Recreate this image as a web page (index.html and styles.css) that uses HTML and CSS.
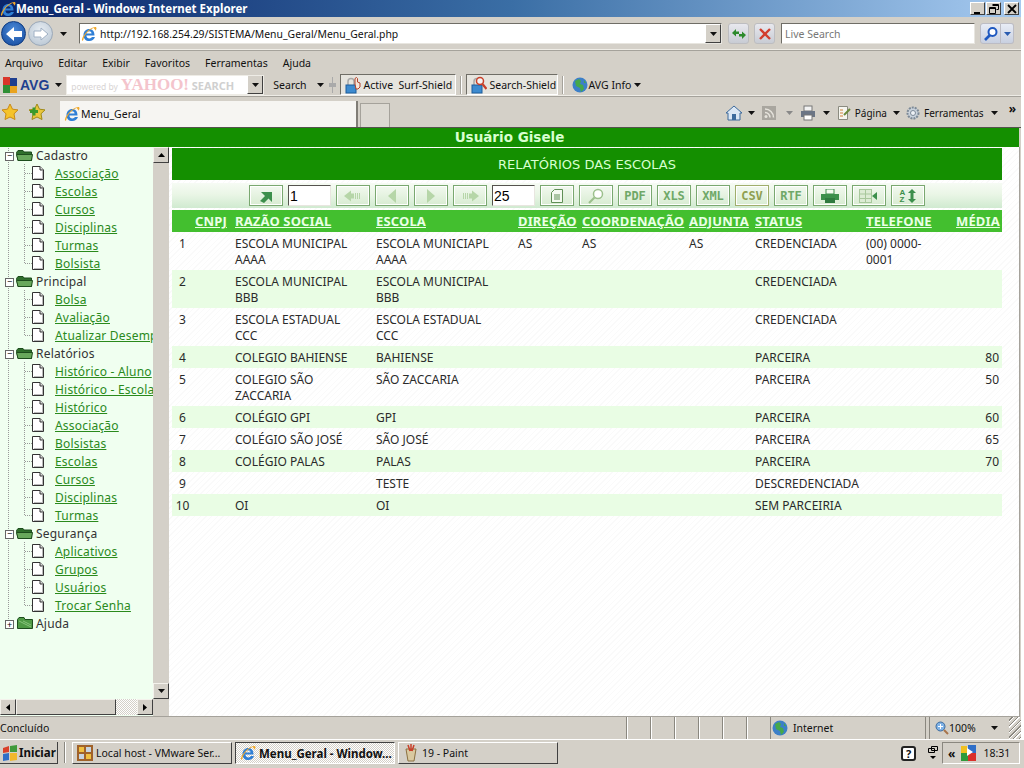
FILE: index.html
```html
<!DOCTYPE html>
<html lang="pt">
<head>
	<meta charset="UTF-8">
	<title>Menu_Geral - Windows Internet Explorer</title>
	<link rel="stylesheet" href="styles.css">
</head>
<body>
<svg class="defs" width="0" height="0">
	<symbol id="ie" viewBox="0 0 16 16">
		<path d="M2.500 9.200C2.500 5.500 5 3 8.300 3c3.200 0 5.200 2.400 5.200 6.400H5.400c.1 2 1.300 3 3 3 1.200 0 2-.5 2.600-1.300h3c-1 2.500-3.100 3.900-5.700 3.900-3.500 0-5.800-2.300-5.800-5.800zM5.500 7.400h5.100C10.400 6 9.600 5.200 8.100 5.200 6.700 5.200 5.800 6 5.500 7.400z" fill="#2f7fd6"/>
		<path d="M1 14.600C.2 12.800 4 6 9.500 2.800 12 1.300 14.600.5 15.300 1.500c.5.700 0 2-.8 3.200-.3-1-.8-1.800-1.500-2.300.5-.5-.5-.5-2 .3C6.500 5 3 10 2.400 13.500c-.1.700-.8 1.600-1.400 1.100z" fill="#f0a92c"/>
	</symbol>
	<symbol id="page" viewBox="0 0 12 14">
		<path d="M.5.500h7.500l3.500 3.500v9.500H.5z" fill="#fff" stroke="#333"/>
		<path d="M8 .5V4h3.500" fill="#ddd" stroke="#333"/>
		<path d="M10.500 5v8M2 12.500h8.500" stroke="#bbb"/>
	</symbol>
	<symbol id="folder" viewBox="0 0 17 12">
		<path d="M.5 3.500 2 1.500h5l1 1.500h7.500v8.500H2z" fill="#2f6f2c" stroke="#1d4d1d"/>
		<path d="M.5 5.500h16l-1 6H2z" fill="#68a85c" stroke="#1d4d1d"/>
	</symbol>
	<symbol id="closedfolder" viewBox="0 0 17 12">
		<path d="M1.500 2.500 3 .5h5l1 2h7.500v9h-15z" fill="#4f9a45" stroke="#1d4d1d"/>
		<path d="M3 4l12 6M7 4l8 4" stroke="#87c57b"/>
	</symbol>
	<symbol id="globe" viewBox="0 0 16 16">
		<circle cx="8" cy="8" r="7.500" fill="#3c7fc8"/>
		<path d="M3 4l4-2 2 2-1 3 3 1 1 4-3 3-1-4-4-2zM12 3l2 3-2 0z" fill="#46a84a"/>
	</symbol>
	<symbol id="shield" viewBox="0 0 16 18">
		<path d="M3 9V5.500a3 3 0 0 1 6 0V9" fill="none" stroke="#a8a8a8" stroke-width="1.500"/>
		<rect x="1" y="9" width="10" height="8" fill="#3d8bd0" stroke="#1c5c9c"/>
		<path d="M10 8V2.500l1.500-1 1 1V6l2.500 1v4l-2 2h-2z" fill="#f6e6da" stroke="#b0402a"/>
	</symbol>
	<symbol id="shieldlens" viewBox="0 0 16 18">
		<path d="M3 9V5.500a3 3 0 0 1 6 0V9" fill="none" stroke="#a8a8a8" stroke-width="1.500"/>
		<rect x="1" y="9" width="10" height="8" fill="#3d8bd0" stroke="#1c5c9c"/>
		<circle cx="9" cy="5" r="3.500" fill="#f4f4f4" stroke="#c8402a" stroke-width="1.500"/>
		<path d="M11.500 8l4 5" stroke="#c8402a" stroke-width="2.200"/>
	</symbol>
	<symbol id="caret" viewBox="0 0 7 4"><path d="M0 0h7L3.500 4z" fill="#111"/></symbol>
</svg>

<div class="window">
<header class="titlebar">
	<svg class="ico16"><use href="#ie"/></svg>
	<span class="titletext">Menu_Geral - Windows Internet Explorer</span>
	<div class="winbtns">
		<span class="winbtn"><svg width="10" height="10"><path d="M1 8h6v2H1z" fill="#000"/></svg></span>
		<span class="winbtn"><svg width="10" height="10"><path d="M3.500.5h6v5h-2M.5 3.500h6v6h-6z M.5 4.500h6M3.500 1.500h6" fill="none" stroke="#000"/></svg></span>
		<span class="winbtn"><svg width="10" height="10"><path d="M1 1l8 8M9 1l-8 8" stroke="#000" stroke-width="1.800"/></svg></span>
	</div>
</header>

<div class="addrbar">
	<span class="navbtn back"><svg width="22" height="18"><path d="M11 2 3 9l8 7v-4h8V6h-8z" fill="#fff"/></svg></span>
	<span class="navbtn fwd"><svg width="22" height="18"><path d="M11 3l7 6-7 6v-3H4V6h7z" fill="#fff" stroke="#9fb0c4"/></svg></span>
	<svg class="navcaret" width="7" height="4"><use href="#caret"/></svg>
	<div class="addrbox">
		<svg class="addrico" width="16" height="16"><use href="#ie"/></svg>
		<span class="addrurl">http://192.168.254.29/SISTEMA/Menu_Geral/Menu_Geral.php</span>
		<span class="combo"><svg width="7" height="4"><use href="#caret"/></svg></span>
	</div>
	<span class="smallbtn first"><svg width="16" height="14"><path d="M1 6l4-4v2.500h3V7H5v2.500zM15 8l-4 4V9.500H8V7h3V4.500z" fill="#2c8a2c"/></svg></span>
	<span class="smallbtn stop"><svg width="14" height="14"><path d="M2 2l10 10M12 2 2 12" stroke="#d23c2c" stroke-width="2.400"/></svg></span>
	<div class="searchbox">Live Search</div>
	<span class="searchbtn"><svg width="16" height="16"><circle cx="9.500" cy="6" r="4" fill="#fff" stroke="#1e58c0" stroke-width="2"/><path d="M7 9l-5 5" stroke="#1e58c0" stroke-width="2.600"/></svg></span>
	<span class="searchdrop"><svg width="7" height="4"><path d="M0 0h7L3.500 4z" fill="#2a5cb0"/></svg></span>
</div>

<nav class="menubar">
	<span>Arquivo</span><span>Editar</span><span>Exibir</span><span>Favoritos</span><span>Ferramentas</span><span>Ajuda</span>
</nav>

<div class="avgbar">
	<svg class="avglogo" width="15" height="16"><rect width="7" height="8" x="1" fill="#d9362a"/><rect width="7" height="8" x="8" y="1" fill="#1f3f8f"/><rect width="7" height="8" x="1" y="8" fill="#2f8f35"/><rect width="7" height="7" x="8" y="9" fill="#e9a31f"/></svg>
	<b class="avgname">AVG</b>
	<svg class="avgcaret" width="7" height="4"><use href="#caret"/></svg>
	<div class="yahoobox">
		<span class="yahootext"><small>powered by</small> <b class="yahoo">YAHOO!</b> <b class="ysearch">SEARCH</b></span>
		<span class="combo"><svg width="7" height="4"><use href="#caret"/></svg></span>
	</div>
	<span class="avglabel">Search</span>
	<svg class="avgcaret2" width="7" height="4"><use href="#caret"/></svg>
	<span class="grip"></span>
	<span class="shieldbtn active-surf"><svg width="16" height="18"><use href="#shield"/></svg>Active&nbsp; Surf-Shield</span>
	<span class="sep"></span>
	<span class="shieldbtn search-shield"><svg width="16" height="18"><use href="#shieldlens"/></svg>Search-Shield</span>
	<span class="sep"></span>
	<svg class="infoico" width="16" height="16"><use href="#globe"/></svg>
	<span class="avglabel info">AVG Info</span>
	<svg width="7" height="4"><use href="#caret"/></svg>
</div>

<div class="tabbar">
	<svg class="favstar" width="18" height="18"><path d="M9 1l2.500 5.200 5.500.7-4 3.900 1 5.700L9 14l-5 2.500 1-5.700-4-3.900 5.500-.7z" fill="#f5c32c" stroke="#c98a18"/></svg>
	<svg class="favadd" width="18" height="18"><path d="M9 1l2.500 5.200 5.500.7-4 3.900 1 5.700L9 14l-5 2.500 1-5.700-4-3.900 5.500-.7z" fill="#e9c63c" stroke="#a08a18"/><path d="M2 8.500h8M6 4.500v8" stroke="#3a9a2c" stroke-width="3"/></svg>
	<div class="tab"><svg width="16" height="16"><use href="#ie"/></svg>Menu_Geral</div>
	<div class="newtab"></div>
	<div class="tabtools">
		<svg width="18" height="18"><path d="M1 9 9 2l8 7h-2v7H3V9z" fill="#dbe7f4" stroke="#3d6a9c"/><rect x="7" y="10" width="4" height="6" fill="#3d6a9c"/></svg>
		<svg class="c1" width="7" height="4"><use href="#caret"/></svg>
		<svg class="tool-rss" width="14" height="14"><rect width="14" height="14" fill="#a9a69f"/><circle cx="4" cy="10.500" r="1.500" fill="#e6e3dc"/><path d="M3 6.500a5 5 0 0 1 5 5M3 3a8.500 8.500 0 0 1 8.500 8.500" fill="none" stroke="#e6e3dc" stroke-width="1.500"/></svg>
		<svg class="c2" width="7" height="4"><path d="M0 0h7L3.500 4z" fill="#888"/></svg>
		<svg class="tool-print" width="16" height="16"><rect x="4" y="1" width="8" height="5" fill="#f2f2f2" stroke="#777"/><rect x="1" y="6" width="14" height="6" fill="#6b7585"/><rect x="4" y="10" width="8" height="5" fill="#fff" stroke="#777"/></svg>
		<svg class="c3" width="7" height="4"><use href="#caret"/></svg>
		<svg class="tool-page" width="16" height="16"><path d="M2.500 1.500h9v13h-9z" fill="#f6f6f0" stroke="#8b8b80"/><path d="M4 5h3M4 8h3M4 11h3" stroke="#d0803a"/><path d="M8 10l6-6" stroke="#6b8a3a" stroke-width="2"/></svg>
		<span class="toollabel">Página</span>
		<svg class="c4" width="7" height="4"><use href="#caret"/></svg>
		<svg class="tool-gear" width="16" height="16"><circle cx="8" cy="8" r="5.500" fill="#c9d2dc" stroke="#7c8a98" stroke-width="2" stroke-dasharray="2 1"/><circle cx="8" cy="8" r="2.500" fill="#eef2f6" stroke="#7c8a98"/></svg>
		<span class="toollabel">Ferramentas</span>
		<svg class="c5" width="7" height="4"><use href="#caret"/></svg>
		<span class="more">&raquo;</span>
	</div>
</div>

<div class="userbar">Usuário Gisele</div>

<main class="frames">
	<aside class="leftframe">
		<div class="treewrap">
			<div class="tree">
				<div class="node"><span class="box">&minus;</span><svg class="fold" width="17" height="12"><use href="#folder"/></svg>Cadastro</div>
				<div class="leaf"><svg width="12" height="14"><use href="#page"/></svg><a href="#">Associação</a></div>
				<div class="leaf"><svg width="12" height="14"><use href="#page"/></svg><a href="#">Escolas</a></div>
				<div class="leaf"><svg width="12" height="14"><use href="#page"/></svg><a href="#">Cursos</a></div>
				<div class="leaf"><svg width="12" height="14"><use href="#page"/></svg><a href="#">Disciplinas</a></div>
				<div class="leaf"><svg width="12" height="14"><use href="#page"/></svg><a href="#">Turmas</a></div>
				<div class="leaf last"><svg width="12" height="14"><use href="#page"/></svg><a href="#">Bolsista</a></div>
				<div class="node"><span class="box">&minus;</span><svg class="fold" width="17" height="12"><use href="#folder"/></svg>Principal</div>
				<div class="leaf"><svg width="12" height="14"><use href="#page"/></svg><a href="#">Bolsa</a></div>
				<div class="leaf"><svg width="12" height="14"><use href="#page"/></svg><a href="#">Avaliação</a></div>
				<div class="leaf last"><svg width="12" height="14"><use href="#page"/></svg><a href="#">Atualizar Desempenho</a></div>
				<div class="node"><span class="box">&minus;</span><svg class="fold" width="17" height="12"><use href="#folder"/></svg>Relatórios</div>
				<div class="leaf"><svg width="12" height="14"><use href="#page"/></svg><a href="#">Histórico - Aluno</a></div>
				<div class="leaf"><svg width="12" height="14"><use href="#page"/></svg><a href="#">Histórico - Escola</a></div>
				<div class="leaf"><svg width="12" height="14"><use href="#page"/></svg><a href="#">Histórico</a></div>
				<div class="leaf"><svg width="12" height="14"><use href="#page"/></svg><a href="#">Associação</a></div>
				<div class="leaf"><svg width="12" height="14"><use href="#page"/></svg><a href="#">Bolsistas</a></div>
				<div class="leaf"><svg width="12" height="14"><use href="#page"/></svg><a href="#">Escolas</a></div>
				<div class="leaf"><svg width="12" height="14"><use href="#page"/></svg><a href="#">Cursos</a></div>
				<div class="leaf"><svg width="12" height="14"><use href="#page"/></svg><a href="#">Disciplinas</a></div>
				<div class="leaf last"><svg width="12" height="14"><use href="#page"/></svg><a href="#">Turmas</a></div>
				<div class="node"><span class="box">&minus;</span><svg class="fold" width="17" height="12"><use href="#folder"/></svg>Segurança</div>
				<div class="leaf"><svg width="12" height="14"><use href="#page"/></svg><a href="#">Aplicativos</a></div>
				<div class="leaf"><svg width="12" height="14"><use href="#page"/></svg><a href="#">Grupos</a></div>
				<div class="leaf"><svg width="12" height="14"><use href="#page"/></svg><a href="#">Usuários</a></div>
				<div class="leaf last"><svg width="12" height="14"><use href="#page"/></svg><a href="#">Trocar Senha</a></div>
				<div class="node end"><span class="box plus">+</span><svg class="fold" width="17" height="12"><use href="#closedfolder"/></svg>Ajuda</div>
			</div>
			<div class="hscroll">
				<span class="sbtn"><svg width="4" height="7"><path d="M4 0v7L0 3.500z" fill="#000"/></svg></span>
				<span class="hthumb"></span>
				<span class="htrack"></span>
				<span class="sbtn"><svg width="4" height="7"><path d="M0 0v7l4-3.500z" fill="#000"/></svg></span>
			</div>
		</div>
		<div class="vscroll">
			<span class="sbtn"><svg width="7" height="4"><path d="M0 4h7L3.500 0z" fill="#000"/></svg></span>
			<span class="vtrack"></span>
			<span class="sbtn"><svg width="7" height="4"><use href="#caret"/></svg></span>
			<span class="corner"></span>
		</div>
	</aside>

	<section class="content">
		<h1 class="reptitle">RELATÓRIOS DAS ESCOLAS</h1>
		<div class="reptools">
			<span class="tb"><svg width="18" height="14"><path d="M3 12 8 7 4 3h11v10l-3.500-3.500L7 14z" fill="#3c8f4c"/></svg></span>
			<input class="pg" value="1" readonly>
			<span class="tb off"><svg width="20" height="12"><path d="M1 6l7-5.500v3h3v5H8v3zM12 3h1v6h-1zM14 3h1v6h-1zM16 3h1v6h-1z" fill="#b6d6a8"/></svg></span>
			<span class="tb off"><svg width="10" height="14"><path d="M9 0v14L1 7z" fill="#b6d6a8"/></svg></span>
			<span class="tb off"><svg width="10" height="14"><path d="M1 0v14l8-7z" fill="#b6d6a8"/></svg></span>
			<span class="tb off"><svg width="20" height="12"><path d="M19 6l-7-5.500v3H9v5h3v3zM8 3H7v6h1zM6 3H5v6h1zM4 3H3v6h1z" fill="#b6d6a8"/></svg></span>
			<input class="pg" value="25" readonly>
			<span class="tb"><svg width="12" height="14"><path d="M3.500.5h8v13h-11V3.500z" fill="#f4faf0" stroke="#5f8f55"/><path d="M3 6h6M3 8h6M3 10h6" stroke="#5f8f55"/></svg></span>
			<span class="tb"><svg width="18" height="16"><circle cx="11" cy="6" r="4.500" fill="#fff" stroke="#9cc08c" stroke-width="1.500"/><path d="M7.500 9.500 2 15" stroke="#9cc08c" stroke-width="2.200"/></svg></span>
			<span class="tb lbl">PDF</span>
			<span class="tb lbl">XLS</span>
			<span class="tb lbl">XML</span>
			<span class="tb lbl csv">CSV</span>
			<span class="tb lbl">RTF</span>
			<span class="tb"><svg width="18" height="14"><rect x="5" y="0" width="8" height="5" fill="#f4faf0" stroke="#3c8f4c"/><rect x="0" y="5" width="18" height="6" fill="#3c8f4c"/><rect x="4" y="9" width="10" height="5" fill="#2f7a3f"/></svg></span>
			<span class="tb"><svg width="20" height="14"><rect x=".5" y=".5" width="12" height="13" fill="#dcecd4" stroke="#a8c89c"/><path d="M.5 5h12M.5 9.500h12M6.500 1v12" stroke="#a8c89c"/><path d="M13 7l5-4v8z" fill="#3c8f4c"/></svg></span>
			<span class="tb sort"><span class="az">A<br>Z</span><svg width="8" height="14"><path d="M4 0 8 4H5.500v6H8l-4 4-4-4h2.500V4H0z" fill="#3c8f4c"/></svg></span>
		</div>
		<table class="grid">
			<colgroup>
				<col class="c-num"><col class="c-cnpj"><col class="c-razao"><col class="c-escola"><col class="c-dir"><col class="c-coord"><col class="c-adj"><col class="c-status"><col class="c-tel"><col class="c-media">
			</colgroup>
			<thead>
				<tr><th></th><th>CNPJ</th><th>RAZÃO SOCIAL</th><th>ESCOLA</th><th>DIREÇÃO</th><th>COORDENAÇÃO</th><th>ADJUNTA</th><th>STATUS</th><th>TELEFONE</th><th class="num">MÉDIA</th></tr>
			</thead>
			<tbody>
				<tr><td class="idx">1</td><td></td><td>ESCOLA MUNICIPAL AAAA</td><td>ESCOLA MUNICIAPL AAAA</td><td>AS</td><td>AS</td><td>AS</td><td>CREDENCIADA</td><td>(00) 0000-0001</td><td></td></tr>
				<tr class="alt"><td class="idx">2</td><td></td><td>ESCOLA MUNICIPAL BBB</td><td>ESCOLA MUNICIPAL BBB</td><td></td><td></td><td></td><td>CREDENCIADA</td><td></td><td></td></tr>
				<tr><td class="idx">3</td><td></td><td>ESCOLA ESTADUAL CCC</td><td>ESCOLA ESTADUAL CCC</td><td></td><td></td><td></td><td>CREDENCIADA</td><td></td><td></td></tr>
				<tr class="alt"><td class="idx">4</td><td></td><td>COLEGIO BAHIENSE</td><td>BAHIENSE</td><td></td><td></td><td></td><td>PARCEIRA</td><td></td><td class="num">80</td></tr>
				<tr><td class="idx">5</td><td></td><td>COLEGIO SÃO ZACCARIA</td><td>SÃO ZACCARIA</td><td></td><td></td><td></td><td>PARCEIRA</td><td></td><td class="num">50</td></tr>
				<tr class="alt"><td class="idx">6</td><td></td><td>COLÉGIO GPI</td><td>GPI</td><td></td><td></td><td></td><td>PARCEIRA</td><td></td><td class="num">60</td></tr>
				<tr><td class="idx">7</td><td></td><td>COLÉGIO SÃO JOSÉ</td><td>SÃO JOSÉ</td><td></td><td></td><td></td><td>PARCEIRA</td><td></td><td class="num">65</td></tr>
				<tr class="alt"><td class="idx">8</td><td></td><td>COLÉGIO PALAS</td><td>PALAS</td><td></td><td></td><td></td><td>PARCEIRA</td><td></td><td class="num">70</td></tr>
				<tr><td class="idx">9</td><td></td><td></td><td>TESTE</td><td></td><td></td><td></td><td class="wide">DESCREDENCIADA</td><td></td><td></td></tr>
				<tr class="alt"><td class="idx">10</td><td></td><td>OI</td><td>OI</td><td></td><td></td><td></td><td>SEM PARCEIRIA</td><td></td><td></td></tr>
			</tbody>
		</table>
	</section>
</main>

<div class="statusbar">
	<span class="st-msg">Concluído</span>
	<span class="st-cell"></span><span class="st-cell"></span><span class="st-cell"></span><span class="st-cell"></span><span class="st-cell"></span><span class="st-cell"></span>
	<span class="st-zone"><svg width="16" height="16"><use href="#globe"/></svg>Internet</span>
	<span class="st-zoom"><svg width="14" height="14"><circle cx="5.500" cy="5.500" r="4.500" fill="#7fb2e6" stroke="#3d6a9c"/><path d="M3 5.500h5M5.500 3v5" stroke="#fff"/><path d="M9 9l4 4" stroke="#a8744a" stroke-width="2"/></svg>100%<svg class="zoomcaret" width="7" height="4"><use href="#caret"/></svg></span>
	<span class="st-grip"></span>
</div>
</div>

<footer class="taskbar">
	<span class="startbtn"><svg width="16" height="16"><path d="M1 3 7 1v6L1 8z" fill="#d9402a"/><path d="M8 1l7-1v7H8z" fill="#3f9a3a"/><path d="M1 9l6-1v7l-6 1z" fill="#2f6fc8"/><path d="M8 8h7v7l-7 1z" fill="#f0b82c"/></svg>Iniciar</span>
	<span class="tasksep"></span>
	<span class="taskbtn t-vm"><svg width="16" height="16"><rect width="16" height="16" fill="#a0622a"/><rect x="2" y="2" width="5" height="5" fill="#f0c040"/><rect x="9" y="9" width="5" height="5" fill="#f0c040"/><rect x="9" y="2" width="5" height="5" fill="#c8d4e0"/><rect x="2" y="9" width="5" height="5" fill="#c8d4e0"/></svg>Local host - VMware Ser...</span>
	<span class="taskbtn t-ie"><svg width="16" height="16"><use href="#ie"/></svg>Menu_Geral - Window...</span>
	<span class="taskbtn t-paint"><svg width="16" height="18"><path d="M3 5h10l-2 12H5z" fill="#d9c9a0" stroke="#8a7040"/><path d="M5 1l2 6M8 0v7M11 1 9 7" stroke="#c8402a" stroke-width="1.500"/></svg>19 - Paint</span>
	<span class="taskfill"></span>
	<span class="helpbtn">?</span>
	<span class="desktopbtn"><svg width="10" height="14"><path d="M3.500.5h6v4h-6zM.5 2.500h6v4h-6z" fill="#d4d0c8" stroke="#000"/><path d="M2 10h6l-3 3z" fill="#000"/></svg></span>
	<span class="tray"><span class="chev">&laquo;</span><svg width="16" height="16"><rect x="1" y="1" width="6" height="7" fill="#f0c020"/><rect x="1" y="8" width="7" height="8" fill="#2f9a3a"/><rect x="8" y="0" width="8" height="8" fill="#2f6fc8"/><rect x="8" y="8" width="8" height="8" fill="#d9302a"/><path d="M7 3l6 4-6 4z" fill="#fff"/></svg><span class="clock">18:31</span></span>
</footer>
</body>
</html>
```

FILE: styles.css
```css
*{
	margin:0;
	padding:0;
	box-sizing:border-box;
}
html,body{
	width:1024px;
	height:768px;
	overflow:hidden;
}
body{
	display:flex;
	flex-direction:column;
	font-family:"Noto Sans","Open Sans",sans-serif;
	font-size:10.5px;
	color:#111;
	background:#fff;
}
.defs{
	position:absolute;
}
svg{
	flex:none;
	display:block;
}
.ico16{
	width:16px;
	height:16px;
}
.window{
	width:1021px;
	height:739px;
	flex:none;
	display:flex;
	flex-direction:column;
	background:#d4d0c8;
}

/* title bar */
.titlebar{
	height:17px;
	flex:none;
	display:flex;
	align-items:center;
	background:linear-gradient(to right,#0a246a 0,#3a6ea5 50%,#a6caf0 100%);
	color:#fff;
	font-weight:bold;
	font-size:11.5px;
}
.winbtns{
	margin-left:auto;
	display:flex;
	margin-right:2px;
	gap:1px;
}
.winbtns .winbtn:nth-child(2){
	margin-right:2px;
}
.winbtn{
	width:15px;
	height:13px;
	background:#d4d0c8;
	border:1px solid;
	border-color:#fff #404040 #404040 #fff;
	display:flex;
	align-items:center;
	justify-content:center;
}

/* address bar */
.addrbar{
	height:34px;
	flex:none;
	display:flex;
	align-items:center;
	border-bottom:1px solid #a5a29b;
	box-shadow:inset 0 -1px 0 #eeece6;
}
.navbtn{
	width:25px;
	height:25px;
	border-radius:50%;
	display:flex;
	align-items:center;
	justify-content:center;
}
.back{
	margin-left:1px;
	background:radial-gradient(circle at 50% 35%,#4c8ad8,#12489c);
	border:1px solid #0d3a80;
}
.fwd{
	margin-left:2px;
	background:radial-gradient(circle at 50% 35%,#e6ecf2,#b4c2d0);
	border:1px solid #9aa8b8;
}
.navcaret{
	margin-left:7px;
}
.addrbox{
	width:643px;
	height:21px;
	margin-left:12px;
	background:#fff;
	border:1px solid;
	border-color:#6f6d66 #e8e6e0 #e8e6e0 #6f6d66;
	display:flex;
	align-items:center;
	padding-left:1px;
}
.addrurl{
	margin:1px 0 0 3px;
	font-size:10.4px;
}
.combo{
	margin-left:auto;
	width:16px;
	height:19px;
	flex:none;
	background:#d4d0c8;
	border:1px solid;
	border-color:#fff #404040 #404040 #fff;
	display:flex;
	align-items:center;
	justify-content:center;
}
.smallbtn{
	width:21px;
	height:21px;
	background:linear-gradient(#e8e8ee,#c8ccd4);
	border:1px solid #bdbdc0;
	border-radius:3px;
	display:flex;
	align-items:center;
	justify-content:center;
}
.smallbtn.first{
	margin-left:6px;
}
.smallbtn.stop{
	margin-left:5px;
}
.searchbox{
	width:194px;
	height:21px;
	margin-left:6px;
	background:#fff;
	border:1px solid;
	border-color:#6f6d66 #e8e6e0 #e8e6e0 #6f6d66;
	color:#777;
	padding-left:3px;
	line-height:21px;
}
.searchbtn{
	width:21px;
	height:21px;
	margin-left:5px;
	background:linear-gradient(#e8ecf6,#c8d0e0);
	border:1px solid #bcbcc4;
	border-radius:3px 0 0 3px;
	display:flex;
	align-items:center;
	justify-content:center;
}
.searchdrop{
	width:13px;
	height:21px;
	background:linear-gradient(#e8ecf6,#c8d0e0);
	border:1px solid #bcbcc4;
	border-left:0;
	border-radius:0 3px 3px 0;
	display:flex;
	align-items:center;
	justify-content:center;
}

/* menu */
.menubar{
	height:23px;
	flex:none;
	display:flex;
	align-items:center;
	gap:15px;
	padding-left:5px;
	padding-top:1px;
}

/* avg toolbar */
.avgbar{
	height:23px;
	flex:none;
	display:flex;
	align-items:center;
	border-bottom:1px solid #a5a29b;
	box-shadow:inset 0 -1px 0 #eeece6;
	padding-bottom:1px;
}
.avglogo{
	margin-left:2px;
}
.avgname{
	margin-left:3px;
	font-size:14px;
	color:#1f3f8f;
	font-family:"Liberation Sans",sans-serif;
}
.avgcaret{
	margin-left:6px;
}
.yahoobox{
	width:198px;
	height:20px;
	margin-left:4px;
	background:#fff;
	display:flex;
	align-items:center;
	padding-left:4px;
	overflow:hidden;
	white-space:nowrap;
	border:1px solid #eeece6;
}
.yahootext{
	flex:1;
	min-width:0;
}
.yahootext small{
	font-size:8.5px;
	color:#d8d4d4;
}
.yahoo{
	font-family:"Liberation Serif",serif;
	font-size:17px;
	line-height:16px;
	color:#f4c4cc;
}
.ysearch{
	font-size:11px;
	color:#d0d0d0;
}
.avglabel{
	margin-left:9px;
}
.avgcaret2{
	margin-left:10px;
}
.grip{
	width:7px;
	height:16px;
	margin:0 4px 0 5px;
	background:linear-gradient(to right,transparent 3px,#aaa 3px,#aaa 4px,transparent 4px),linear-gradient(transparent 6px,#aaa 6px,#aaa 10px,transparent 10px);
}
.shieldbtn{
	height:21px;
	flex:none;
	display:flex;
	align-items:center;
	gap:3px;
	padding:0 2px 0 4px;
	white-space:nowrap;
	border:1px solid;
	border-color:#6f6d66 #fff #fff #6f6d66;
	background:#e6e4de;
}
.active-surf{
	width:116px;
}
.search-shield{
	width:92px;
}
.sep{
	width:2px;
	height:18px;
	margin:0 4px;
	border-left:1px solid #a5a29b;
	border-right:1px solid #fff;
}
.infoico{
	margin-left:4px;
}
.avglabel.info{
	margin:0 3px 0 1px;
}

/* favorites and tab row */
.tabbar{
	height:31px;
	flex:none;
	display:flex;
	align-items:center;
	border-bottom:1px solid #55534e;
}
.favstar{
	margin-left:1px;
}
.favadd{
	margin-left:9px;
}
.tab{
	width:298px;
	height:26px;
	margin-left:14px;
	align-self:flex-end;
	background:#f6f5f2;
	border-right:2px solid #807d76;
	display:flex;
	align-items:center;
	gap:1px;
	padding-left:4px;
}
.newtab{
	width:30px;
	height:24px;
	align-self:flex-end;
	margin-left:2px;
	border:1px solid #a5a29b;
	border-bottom:0;
	background:#dcd9d2;
}
.tabtools{
	margin-left:auto;
	display:flex;
	align-items:center;
	padding:2px 5px 0 0;
	font-size:10px;
}
.c1{
	margin-left:5px;
}
.tool-rss{
	margin-left:7px;
}
.c2{
	margin-left:10px;
}
.tool-print{
	margin-left:7px;
}
.c3{
	margin-left:7px;
}
.tool-page{
	margin-left:6px;
}
.toollabel{
	margin-left:3px;
}
.c4{
	margin-left:6px;
}
.tool-gear{
	margin-left:5px;
}
.c5{
	margin-left:7px;
}
.more{
	font-weight:bold;
	font-size:12px;
	margin-left:11px;
	margin-top:-10px;
}

/* green user line */
.userbar{
	height:19px;
	flex:none;
	background:#148f00;
	color:#d8ffd0;
	font-family:"DejaVu Sans",sans-serif;
	font-weight:bold;
	font-size:13.5px;
	line-height:19px;
	text-align:center;
	margin-right:2px;
}

/* frames */
.frames{
	flex:1;
	min-height:0;
	display:flex;
	border-right:1px solid #a5a29b;
	margin-right:1px;
	border-bottom:1px solid #a5a29b;
	background:#fff;
}
.leftframe{
	width:169px;
	display:flex;
	flex:none;
}
.treewrap{
	width:153px;
	display:flex;
	flex-direction:column;
	background:#f0fff0;
}
.tree{
	flex:1;
	min-height:0;
	overflow:hidden;
	font-size:12px;
	white-space:nowrap;
	letter-spacing:.2px;
}
.node,.leaf{
	height:18px;
	display:flex;
	align-items:center;
}
.node:first-child{
	margin-top:-1px;
}
.node{
	padding-left:5px;
	color:#333;
	background:repeating-linear-gradient(#999 0 1px,transparent 1px 2px) 8px 0/1px 18px no-repeat;
}
.node.end{
	background-size:1px 8px;
}
.box{
	width:9px;
	height:9px;
	flex:none;
	border:1px solid #666;
	background:#fff;
	font-size:9px;
	line-height:6px;
	text-align:center;
	color:#000;
	margin-top:3px;
	letter-spacing:0;
}
.box.plus{
	line-height:7px;
}
.fold{
	margin:0 3px 0 2px;
}
.leaf{
	padding-left:32px;
	background:
		repeating-linear-gradient(#999 0 1px,transparent 1px 2px) 8px 0/1px 18px no-repeat,
		repeating-linear-gradient(#999 0 1px,transparent 1px 2px) 24px 0/1px 18px no-repeat,
		repeating-linear-gradient(to right,#999 0 1px,transparent 1px 2px) 25px 9px/7px 1px no-repeat;
}
.leaf.last{
	background-size:1px 18px,1px 10px,7px 1px;
}
.leaf svg{
	margin-right:11px;
}
.leaf a{
	color:#2a8a1c;
}
.hscroll{
	height:16px;
	display:flex;
	flex:none;
	background:repeating-conic-gradient(#d4d0c8 0 25%,#fff 0 50%) 0 0/2px 2px;
	margin-bottom:1px;
}
.sbtn{
	width:16px;
	height:16px;
	flex:none;
	background:#d4d0c8;
	border:1px solid;
	border-color:#f4f2ec #404040 #404040 #f4f2ec;
	display:flex;
	align-items:center;
	justify-content:center;
}
.hthumb{
	width:100px;
	background:#d4d0c8;
	border:1px solid;
	border-color:#f4f2ec #404040 #404040 #f4f2ec;
}
.htrack{
	flex:1;
}
.vscroll{
	width:16px;
	display:flex;
	flex-direction:column;
	background:#d4d0c8;
	box-shadow:1px 0 0 #8a877f;
}
.vtrack{
	flex:1;
}
.corner{
	height:17px;
	flex:none;
}

/* right frame */
.content{
	flex:1;
	min-width:0;
	padding:1px 0 0 3px;
	background:repeating-linear-gradient(135deg,#fff 0 3px,#fafafa 3px 4px);
}
.reptitle{
	width:830px;
	height:32px;
	background:#148f00;
	color:#d8ffd0;
	font-family:"DejaVu Sans",sans-serif;
	font-weight:normal;
	font-size:13px;
	line-height:33px;
	text-align:center;
}
.reptools{
	width:830px;
	height:25px;
	margin-top:3px;
	display:flex;
	align-items:center;
	justify-content:center;
	gap:5px;
	background:linear-gradient(#f6fbf4,#eaf6e6 45%,#d0ead0);
}
.tb{
	width:34px;
	height:21px;
	background:linear-gradient(#f2f9ef,#d8ecd2);
	border:1px solid #7aa870;
	box-shadow:inset 0 0 0 1px #fff;
	display:flex;
	align-items:center;
	justify-content:center;
}
.lbl{
	font-family:"DejaVu Sans Mono","Liberation Mono",monospace;
	font-weight:bold;
	font-size:12px;
	color:#6fa868;
}
.csv{
	color:#8f9f50;
	border-color:#a0ae6c;
}
.sort{
	gap:3px;
}
.az{
	font-size:8px;
	line-height:7px;
	font-weight:bold;
	color:#3c8f4c;
	font-family:"Liberation Sans",sans-serif;
}
.pg{
	width:43px;
	height:21px;
	border:1px solid;
	border-color:#55534e #e8e6e0 #e8e6e0 #55534e;
	font-family:"Liberation Sans",sans-serif;
	font-size:14px;
	padding-left:1px;
	background:#fff;
	outline:none;
}
.grid{
	width:830px;
	margin-top:2px;
	table-layout:fixed;
	border-collapse:collapse;
	font-size:12px;
	line-height:16px;
}
.c-num{width:21px}
.c-cnpj{width:40px}
.c-razao{width:141px}
.c-escola{width:142px}
.c-dir{width:64px}
.c-coord{width:107px}
.c-adj{width:66px}
.c-status{width:111px}
.c-tel{width:92px}
.c-media{width:46px}
.grid th{
	height:22px;
	background:#43bf2f;
	color:#eaffe6;
	font-size:13px;
	letter-spacing:.15px;
	font-weight:bold;
	text-decoration:underline;
	text-align:left;
	padding:0 2px;
	white-space:nowrap;
}
.grid td{
	padding:4px 12px 2px 2px;
	vertical-align:top;
	color:#2a2a2a;
}
.grid .idx{
	text-align:center;
	padding:4px 0 2px;
}
.grid .num{
	text-align:right;
	padding-left:0;
	padding-right:3px;
}
.grid .wide{
	padding-right:0;
}
.alt td{
	background:#e9fde4;
}

/* status bar */
.statusbar{
	height:22px;
	flex:none;
	display:flex;
	align-items:center;
}
.st-msg{
	width:627px;
	height:100%;
	line-height:22px;
	border-right:1px solid #8a877f;
}
.st-cell{
	width:24px;
	height:100%;
	border-left:1px solid #fff;
	border-right:1px solid #8a877f;
}
.st-zone{
	width:155px;
	height:100%;
	display:flex;
	align-items:center;
	gap:5px;
	padding-left:1px;
	border-right:1px solid #8a877f;
}
.st-zoom{
	width:80px;
	height:100%;
	display:flex;
	align-items:center;
	margin-left:3px;
	padding-left:5px;
	border-left:1px solid #8a877f;
}
.zoomcaret{
	margin-left:15px;
}
.st-grip{
	flex:1;
	height:100%;
	background:repeating-linear-gradient(135deg,transparent 0 2px,#8a877f 2px 3px,#fff 3px 4px);
}

/* windows taskbar */
.taskbar{
	flex:1;
	display:flex;
	align-items:flex-start;
	padding-top:2px;
	background:#d4d0c8;
	border-top:1px solid #fff;
}
.startbtn{
	width:58px;
	height:22px;
	display:flex;
	align-items:center;
	gap:1px;
	font-weight:bold;
	font-size:11.5px;
	border-right:1px solid #404040;
	border-bottom:1px solid #404040;
	padding-left:2px;
}
.tasksep{
	width:2px;
	height:21px;
	margin:0 6px;
	border-left:1px solid #8a877f;
	border-right:1px solid #fff;
}
.taskbtn{
	height:22px;
	display:flex;
	align-items:center;
	gap:3px;
	border:1px solid;
	border-color:#fff #404040 #404040 #fff;
	padding-left:4px;
	white-space:nowrap;
}
.t-vm{
	width:160px;
}
.t-ie{
	width:160px;
	margin-left:3px;
	font-weight:bold;
	font-size:11.5px;
	border-color:#404040 #fff #fff #404040;
	background:repeating-conic-gradient(#d4d0c8 0 25%,#fff 0 50%) 0 0/2px 2px;
}
.t-paint{
	width:160px;
	margin-left:3px;
	gap:3px;
}
.taskfill{
	flex:1;
}
.helpbtn{
	width:15px;
	height:15px;
	margin:4px 12px 0 0;
	border:2px solid #222;
	border-radius:3px;
	background:#fff;
	font-weight:bold;
	font-size:11px;
	line-height:11px;
	text-align:center;
}
.desktopbtn{
	width:14px;
	margin:4px 0 0 0;
}
.tray{
	width:78px;
	height:22px;
	display:flex;
	align-items:center;
	border:1px solid;
	border-color:#8a877f #fff #fff #8a877f;
	padding-left:5px;
	margin-right:4px;
	gap:5px;
}
.chev{
	font-weight:bold;
	font-size:12px;
}
.clock{
	margin-left:2px;
}
```
